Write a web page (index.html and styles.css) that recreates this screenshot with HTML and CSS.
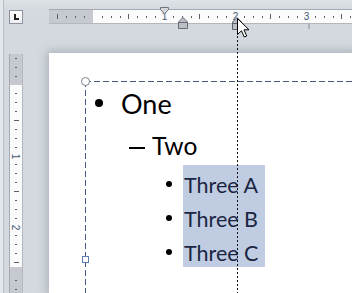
FILE: index.html
```html
<!DOCTYPE html>
<html lang="en">
<head>
    <meta charset="UTF-8">
    <title>Ruler indent drag</title>
    <link rel="stylesheet" href="styles.css">
</head>
<body>
<div class="window">
    <div class="corner">
        <div class="tab-select"><span class="tab-l"></span></div>
    </div>

    <div class="hruler">
        <span class="h"></span><span class="d"></span><span class="d"></span><span class="d"></span>
        <span></span><span class="d"></span><span class="d"></span><span class="d"></span>
        <span class="h"></span><span class="d"></span><span class="d"></span><span class="d"></span>
        <span class="n">1</span><span class="d"></span><span class="d"></span><span class="d"></span>
        <span class="h"></span><span class="d"></span><span class="d"></span><span class="d"></span>
        <span class="n">2</span><span class="d"></span><span class="d"></span><span class="d"></span>
        <span class="h"></span><span class="d"></span><span class="d"></span><span class="d"></span>
        <span class="n">3</span><span class="d"></span><span class="d"></span><span class="d"></span>
        <span class="h"></span><span class="d"></span>

        <!-- indent markers -->
        <svg class="marker first-line" width="9" height="8" viewBox="0 0 9 8">
            <polygon points="0.5,0.5 8.5,0.5 8.5,2.5 4.5,7 0.5,2.5" fill="#d3d6da" stroke="#6e737b"/>
        </svg>
        <svg class="marker hanging" width="10" height="12" viewBox="0 0 10 12">
            <polygon points="5,0.5 9.5,5 9.5,11.5 0.5,11.5 0.5,5" fill="#bcc0c6" stroke="#676c74"/>
            <line x1="0.5" y1="5.5" x2="9.5" y2="5.5" stroke="#676c74"/>
        </svg>
        <svg class="marker dragged" width="10" height="13" viewBox="0 0 10 13">
            <polygon points="5,0.5 9.5,5 9.5,12.5 0.5,12.5 0.5,5" fill="#bcc0c6" stroke="#5d626a"/>
            <line x1="0.5" y1="6.5" x2="9.5" y2="6.5" stroke="#5d626a"/>
        </svg>
        <i class="tab-stop"></i>
    </div>

    <div class="vruler">
        <span class="d"></span><span class="d"></span><span class="d"></span>
        <span></span><span class="d"></span><span class="d"></span><span class="d"></span>
        <span class="h"></span><span class="d"></span><span class="d"></span><span class="d"></span>
        <span class="n"><b>1</b></span><span class="d"></span><span class="d"></span><span class="d"></span>
        <span class="h"></span><span class="d"></span><span class="d"></span><span class="d"></span>
        <span class="n"><b>2</b></span><span class="d"></span><span class="d"></span><span class="d"></span>
        <span class="h"></span><span></span><span class="d"></span><span class="d"></span>
    </div>

    <div class="page">
        <div class="textbox">
            <span class="handle-round"></span>
            <span class="handle-square"></span>

            <div class="row l1"><span class="b1"></span>One</div>
            <div class="row l2"><span class="dash"></span>Two</div>
            <div class="row l3"><span class="b3"></span><span class="sel">Three A</span></div>
            <div class="row l3"><span class="b3"></span><span class="sel">Three B</span></div>
            <div class="row l3"><span class="b3"></span><span class="sel">Three C</span></div>
        </div>
    </div>

    <div class="drag-line"></div>
    <svg class="cursor" width="13" height="20" viewBox="0 0 13 20">
        <polygon points="0.5,0.5 0.5,16.5 4.5,12.8 7.3,19 9.7,18 7,11.8 12,11.8" fill="#fff" stroke="#000"/>
    </svg>
</div>
</body>
</html>
```

FILE: styles.css
```css
* {
    box-sizing: border-box;
}
body {
    margin: 0;
    font-family: "Lato", "Liberation Sans", sans-serif;
}
.window {
    position: relative;
    width: 352px;
    height: 293px;
    overflow: hidden;
    display: grid;
    grid-template-columns: 49px 1fr;
    grid-template-rows: 53px 1fr;
    background:
        linear-gradient(to right, #e4e7eb 0 3px, #b9bec5 3px 4px, transparent 4px),
        linear-gradient(#dee2e7, #d4d9df 10px);
}

/* tab selector in the corner */
.corner {
    padding: 10px 0 0 9px;
}
.tab-select {
    width: 14px;
    height: 14px;
    border: 1px solid #8d939b;
    background: linear-gradient(#ffffff, #eceef1);
    display: flex;
    align-items: center;
    justify-content: center;
}
.tab-l {
    width: 5px;
    height: 6px;
    border-left: 2px solid #222;
    border-bottom: 2px solid #222;
}

/* horizontal ruler */
.hruler {
    position: relative;
    margin-top: 9px;
    height: 15px;
    border-top: 1px solid #a3a9b1;
    border-bottom: 1px solid #b3b8bf;
    background: linear-gradient(to right, #c6cad0 0 44px, #fbfbfc 44px);
    display: flex;
    padding-left: 4.5px;
}
.hruler > span,
.vruler > span {
    flex: none;
    display: flex;
    align-items: center;
    justify-content: center;
}
.hruler > span {
    width: 8.875px;
}
.d::before,
.h::before {
    content: "";
    display: block;
    background: #5c5f63;
}
.hruler .d::before {
    width: 1px;
    height: 2px;
}
.hruler .h::before {
    width: 1px;
    height: 5px;
}
.n {
    font: 10px "Liberation Sans", sans-serif;
    color: #3f5a73;
}
.marker {
    position: absolute;
    display: block;
}
.first-line {
    left: 111px;
    top: -3px;
}
.hanging {
    left: 129px;
    top: 7px;
}
.dragged {
    left: 183px;
    top: 7px;
}
.tab-stop {
    position: absolute;
    left: 259px;
    top: 13px;
    width: 2px;
    height: 6px;
    background: #aeb1b5;
}

/* vertical ruler */
.vruler {
    margin: 1px 0 0 9px;
    width: 14px;
    border-left: 1px solid #a3a9b1;
    border-right: 1px solid #b3b8bf;
    background: linear-gradient(#c6cad0 0 31px, #fbfbfc 31px 213px, #c6cad0 213px);
    display: flex;
    flex-direction: column;
}
.vruler > span {
    height: 8.875px;
}
.vruler .d::before {
    width: 2px;
    height: 1px;
}
.vruler .h::before {
    width: 5px;
    height: 1px;
}
.vruler .n b {
    display: inline-block;
    font-weight: normal;
    transform: rotate(90deg);
}

/* slide page */
.page {
    background: #fff;
    overflow: hidden;
    box-shadow: 0 0 9px 2px rgba(90, 100, 115, 0.35);
}
.textbox {
    position: relative;
    margin: 28px 0 0 36px;
    width: 400px;
    height: 400px;
    padding-top: 3px;
    background:
        repeating-linear-gradient(to right, #45597e 0 6px, transparent 6px 9px) 0 0 / 100% 1px no-repeat,
        repeating-linear-gradient(to bottom, #45597e 0 6px, transparent 6px 9px) 0 0 / 1px 100% no-repeat;
}
.handle-round {
    position: absolute;
    left: -4px;
    top: -4px;
    width: 9px;
    height: 9px;
    border-radius: 50%;
    border: 1px solid #7e8590;
    background: #fff;
}
.handle-square {
    position: absolute;
    left: -3px;
    top: 175px;
    width: 7px;
    height: 7px;
    border: 1px solid #5b7cb5;
    background: #fff;
}
.row {
    white-space: nowrap;
    color: #000;
}
.l1 {
    height: 40px;
    line-height: 40px;
    font-size: 27px;
    padding-left: 10px;
}
.l2 {
    height: 41px;
    line-height: 43px;
    font-size: 24.5px;
    padding-left: 44px;
}
.l3 {
    height: 34px;
    line-height: 28px;
    font-size: 21.5px;
    padding-left: 81px;
}
.b1,
.dash,
.b3 {
    display: inline-block;
    vertical-align: baseline;
    background: #000;
}
.b1 {
    width: 8px;
    height: 8px;
    border-radius: 50%;
    margin: 0 18px 7.5px 0;
}
.dash {
    width: 16px;
    height: 2px;
    margin: 0 7px 6px 0;
}
.b3 {
    width: 6px;
    height: 6px;
    border-radius: 50%;
    margin: 0 11px 6px 0;
}
.sel {
    display: inline-block;
    vertical-align: baseline;
    width: 82px;
    height: 34px;
    padding: 6px 0 0 1px;
    line-height: 28px;
    background: #bfcce1;
    color: #1b2541;
}

/* drag guide and pointer */
.drag-line {
    position: absolute;
    left: 237px;
    top: 24px;
    bottom: 0;
    width: 1px;
    background: repeating-linear-gradient(#111 0 2px, transparent 2px 4px);
}
.cursor {
    position: absolute;
    left: 237px;
    top: 18px;
}
```
